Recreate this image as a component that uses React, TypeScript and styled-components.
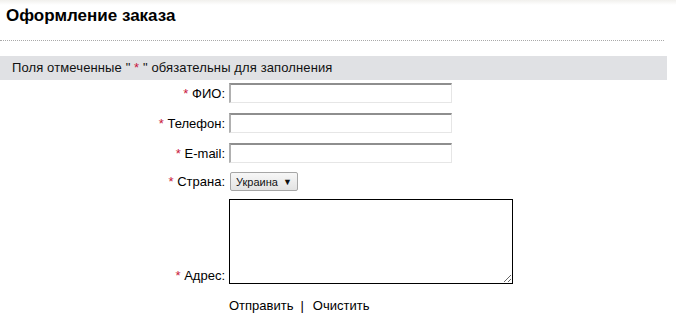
import styled, { createGlobalStyle } from "styled-components";

const GlobalStyle = createGlobalStyle`
  body {
    margin: 0;
    background: #fff;
    font-family: "Liberation Sans", Arial, sans-serif;
    font-size: 13px;
    color: #000;
  }
`

const Page = styled.div`
  width: 676px;
  height: 320px;
  background: linear-gradient(#f1f0ed, #fff 5px);
`
const Title = styled.h1`
  margin: 0;
  padding: 6px 0 0 6px;
  height: 20px;
  line-height: 20px;
  font-size: 17px;
  font-weight: bold;
`
const Divider = styled.div`
  width: 664px;
  margin-top: 14px;
  border-top: 1px dotted #a9a9a9;
`
const Notice = styled.div`
  width: 655px;
  margin-top: 15px;
  height: 24px;
  line-height: 24px;
  padding-left: 12px;
  background: #e0e1e4;
  color: #111;
  letter-spacing: 0.12px;
`
const Star = styled.span`
  color: #c8173c;
`
const Form = styled.form`
  display: flex;
  flex-direction: column;
  padding-top: 3px;
`
const Row = styled.div<{ $bottom?: boolean; $gap: number }>`
  display: flex;
  align-items: ${p => (p.$bottom ? "flex-end" : "center")};
  gap: 4px;
  margin-bottom: ${p => p.$gap}px;
`
const Label = styled.label<{ $shift?: number }>`
  width: 225px;
  text-align: right;
  line-height: 15px;
  margin-bottom: ${p => p.$shift ?? 0}px;
`
const TextInput = styled.input`
  box-sizing: border-box;
  width: 223px;
  height: 20px;
  margin: 0;
  padding: 0 2px;
  border-top: 2px solid #8e8e8e;
  border-left: 2px solid #b0b0b0;
  border-right: 1px solid #e6e6e6;
  border-bottom: 1px solid #e6e6e6;
  background: #fff;
  font: inherit;
`
const SelectBox = styled.div`
  box-sizing: border-box;
  display: inline-flex;
  align-items: center;
  gap: 5px;
  height: 19px;
  margin-left: 1px;
  padding: 0 5px 0 5px;
  border: 1px solid #a6a6a6;
  border-radius: 2px;
  background: linear-gradient(#f7f7f7, #e3e3e3);
  font-size: 11px;
  color: #111;
`
const Arrow = styled.span`
  font-size: 9px;
`
const Area = styled.textarea`
  box-sizing: border-box;
  width: 284px;
  height: 85px;
  margin: 0;
  border: 1px solid #000;
  resize: both;
  font: inherit;
`
const Actions = styled.div`
  padding-left: 229px;
  line-height: 18px;
`
const Action = styled.span`
  cursor: pointer;
`
const Sep = styled.span`
  margin: 0 9px 0 7px;
`

const fields = [
  { id: "fio", label: "ФИО:" },
  { id: "phone", label: "Телефон:" },
  { id: "email", label: "E-mail:" },
]

function App() {
  return (
    <Page>
      <GlobalStyle />
      <Title>Оформление заказа</Title>
      <Divider />
      <Notice>
        Поля отмеченные " <Star>*</Star> " обязательны для заполнения
      </Notice>
      <Form>
        {fields.map(f => (
          <Row key={f.id} $gap={10}>
            <Label htmlFor={f.id}>
              <Star>*</Star> {f.label}
            </Label>
            <TextInput id={f.id} type="text" />
          </Row>
        ))}
        <Row $gap={8} style={{ marginTop: -1 }}>
          <Label>
            <Star>*</Star> Страна:
          </Label>
          <SelectBox>
            Украина <Arrow>▼</Arrow>
          </SelectBox>
        </Row>
        <Row $bottom $gap={13}>
          <Label htmlFor="addr" $shift={1}>
            <Star>*</Star> Адрес:
          </Label>
          <Area id="addr" />
        </Row>
        <Actions>
          <Action>Отправить</Action>
          <Sep>|</Sep>
          <Action>Очистить</Action>
        </Actions>
      </Form>
    </Page>
  );
}

export default App;
